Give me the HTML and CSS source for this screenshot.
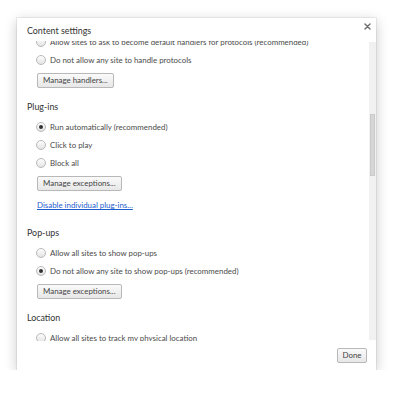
FILE: index.html
```html
<!DOCTYPE html>
<html lang="en">
<head>
  <meta charset="UTF-8">
  <meta name="viewport" content="width=device-width, initial-scale=1.0">
  <title>Content settings</title>
  <link rel="stylesheet" href="styles.css">
</head>
<body>
  <div class="overlay">
    <div class="dialog">
      <!-- Header -->
      <div class="dialog-header">
        <h1 class="dialog-title">Content settings</h1>
        <button class="close-btn" aria-label="Close">
          <svg width="7" height="7" viewBox="0 0 7 7">
            <path d="M1 1 L6 6 M6 1 L1 6" stroke="#6b6b6b" stroke-width="1.4" stroke-linecap="round"/>
          </svg>
        </button>
      </div>

      <!-- Scrolling body -->
      <div class="dialog-body">
        <div class="scroll-area">
          <div class="scroll-content">
            <section class="settings-section">
              <label class="radio-row"><span class="radio"></span>Allow sites to ask to become default handlers for protocols (recommended)</label>
              <label class="radio-row"><span class="radio"></span>Do not allow any site to handle protocols</label>
              <div class="btn-row"><button class="btn">Manage handlers...</button></div>
            </section>

            <section class="settings-section">
              <h2 class="section-title">Plug-ins</h2>
              <label class="radio-row"><span class="radio checked"></span>Run automatically (recommended)</label>
              <label class="radio-row"><span class="radio"></span>Click to play</label>
              <label class="radio-row"><span class="radio"></span>Block all</label>
              <div class="btn-row"><button class="btn">Manage exceptions...</button></div>
              <div class="link-row"><a href="#">Disable individual plug-ins...</a></div>
            </section>

            <section class="settings-section">
              <h2 class="section-title">Pop-ups</h2>
              <label class="radio-row"><span class="radio"></span>Allow all sites to show pop-ups</label>
              <label class="radio-row"><span class="radio checked"></span>Do not allow any site to show pop-ups (recommended)</label>
              <div class="btn-row"><button class="btn">Manage exceptions...</button></div>
            </section>

            <section class="settings-section">
              <h2 class="section-title">Location</h2>
              <label class="radio-row"><span class="radio"></span>Allow all sites to track my physical location</label>
              <label class="radio-row"><span class="radio checked"></span>Ask when a site tries to track your physical location (recommended)</label>
              <label class="radio-row"><span class="radio"></span>Do not allow any site to track your physical location</label>
            </section>
          </div>
        </div>
        <div class="scrollbar">
          <div class="scroll-thumb"></div>
        </div>
      </div>

      <!-- Footer -->
      <div class="dialog-footer">
        <button class="btn done-btn">Done</button>
      </div>
    </div>
  </div>
</body>
</html>
```

FILE: styles.css
```css
body {
  font-family: Lato, "Open Sans", sans-serif;
  background-color: #ffffff;
  margin: 0;
  padding: 0;
}

.overlay {
  padding: 18px 0 0 17px;
}

.dialog {
  width: 359px;
  height: 352px;
  background-color: #ffffff;
  box-shadow: 0 3px 12px rgba(0,0,0,0.22), 0 0 0 1px rgba(0,0,0,0.06);
  display: flex;
  flex-direction: column;
}

/* Header */
.dialog-header {
  display: flex;
  justify-content: space-between;
  align-items: flex-start;
  height: 23px;
  padding: 4px 5px 0 10px;
  box-sizing: border-box;
}

.dialog-title {
  margin: 0;
  font-size: 8.9px;
  font-weight: normal;
  line-height: 18px;
  color: #333;
}

.close-btn {
  border: none;
  background: none;
  padding: 0;
  margin-top: 1px;
  width: 7px;
  height: 7px;
  display: flex;
  cursor: pointer;
}

/* Body */
.dialog-body {
  display: flex;
  height: 300px;
}

.scroll-area {
  flex: 1;
  overflow: hidden;
}

.scroll-content {
  margin-top: -8px;
}

.scrollbar {
  width: 7px;
  margin: 1px 0 1px 0;
  background-color: #f1f1f1;
  padding-top: 72px;
  box-sizing: border-box;
}

.scroll-thumb {
  height: 62px;
  margin: 0 1px;
  background-color: #d6d6d6;
  border: 1px solid #cacaca;
  box-sizing: border-box;
}

.settings-section {
  margin-bottom: 10px;
}

.section-title {
  margin: 0 0 2px 10px;
  font-size: 8.9px;
  font-weight: normal;
  line-height: 18px;
  color: #333;
}

.radio-row {
  display: flex;
  align-items: center;
  height: 18px;
  padding-left: 19px;
  font-size: 7.9px;
  color: #4a4a4a;
  white-space: nowrap;
}

.radio {
  width: 10px;
  height: 10px;
  border-radius: 50%;
  border: 1px solid #b9b9b9;
  background: linear-gradient(#fdfdfd, #e4e4e4);
  box-sizing: border-box;
  margin-right: 4px;
  flex-shrink: 0;
  display: flex;
  align-items: center;
  justify-content: center;
}

.radio.checked::after {
  content: "";
  width: 4px;
  height: 4px;
  border-radius: 50%;
  background-color: #333;
}

.btn-row {
  display: flex;
  padding: 4px 0 0 20px;
}

.btn {
  height: 15px;
  padding: 0 5px;
  font-family: inherit;
  font-size: 7.9px;
  color: #444;
  background: linear-gradient(#fafafa, #e7e7e7);
  border: 1px solid #b8b8b8;
  border-radius: 2px;
  line-height: 13px;
}

.link-row {
  display: flex;
  padding: 5px 0 0 20px;
  line-height: 18px;
  font-size: 7.9px;
}

.link-row a {
  color: #1b5dcc;
  text-decoration: underline;
}

/* Footer */
.dialog-footer {
  display: flex;
  justify-content: flex-end;
  padding: 7px 9px 0 0;
}

.done-btn {
  width: 30px;
  padding: 0;
}
```
